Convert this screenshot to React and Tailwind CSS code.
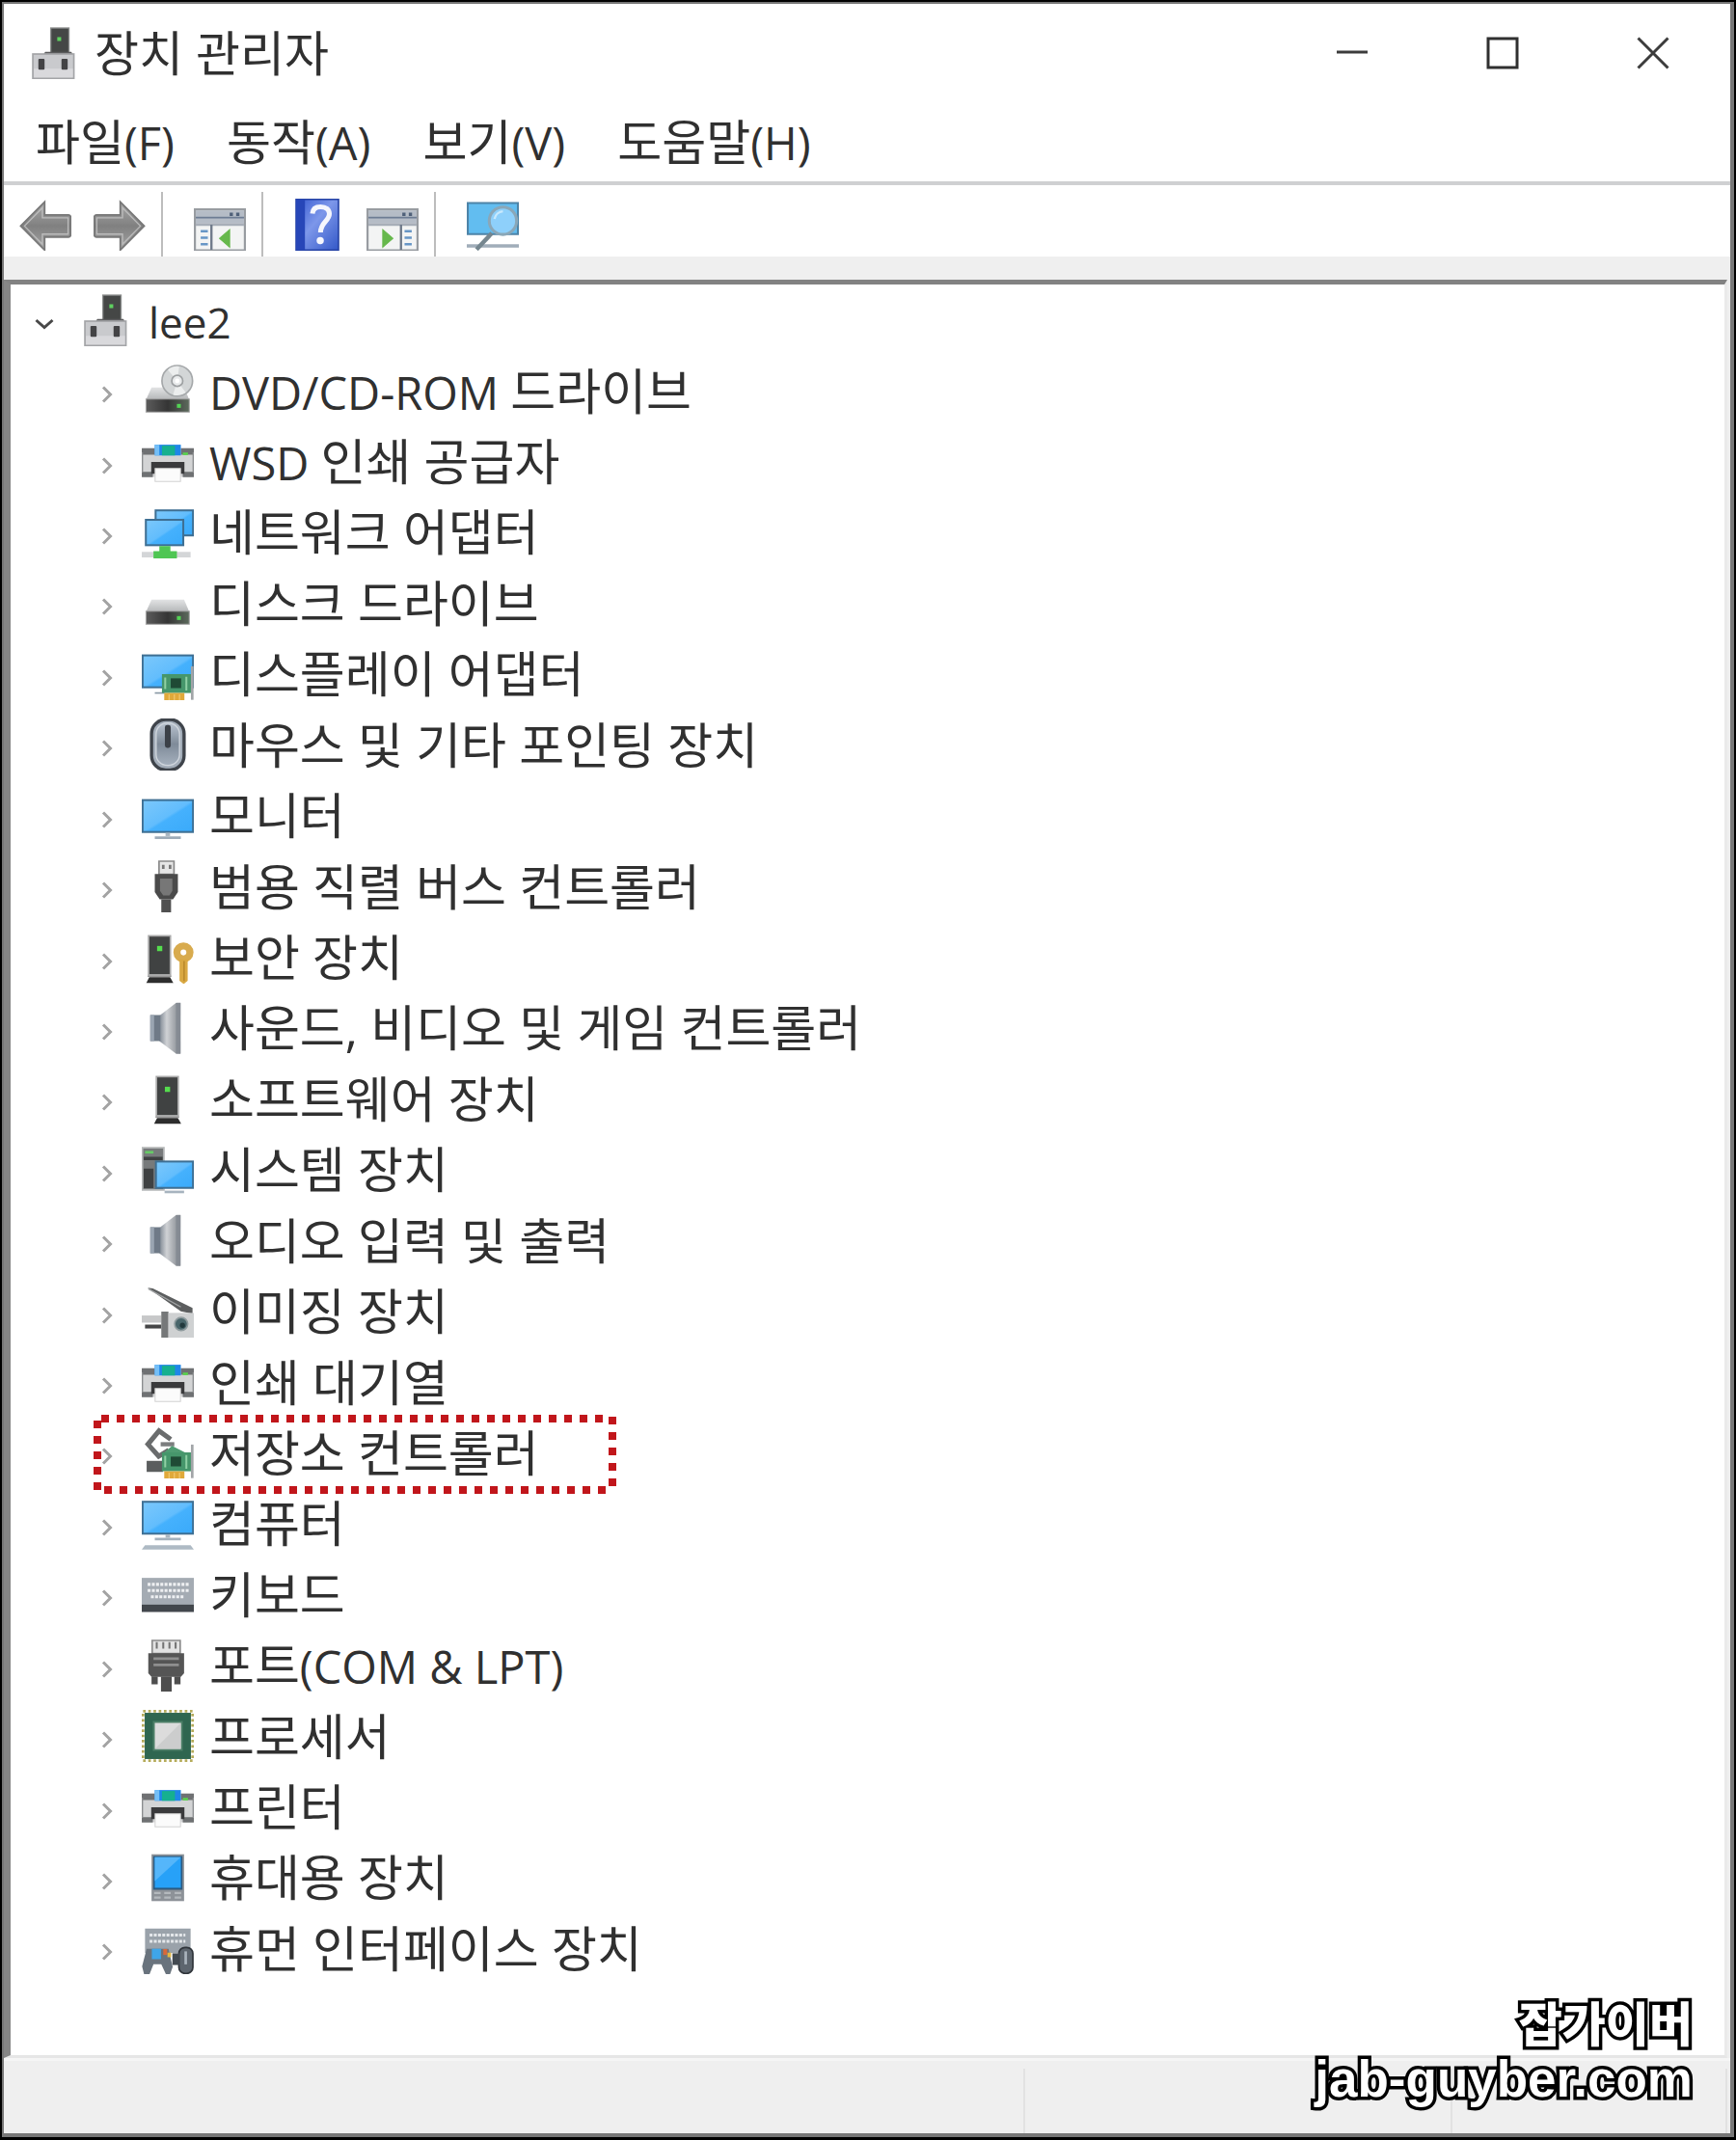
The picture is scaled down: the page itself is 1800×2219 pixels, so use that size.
import React from "react";

function Icon({ children }) {
  return (
    <svg viewBox="0 0 16 16" className="h-[54px] w-[54px] shrink-0" aria-hidden="true">
      {children}
    </svg>
  );
}

function Defs() {
  return (
    <svg width="0" height="0" className="absolute" aria-hidden="true">
      <defs>
        <linearGradient id="screen" x1="0" y1="0" x2="1" y2="1">
          <stop offset="0" stopColor="#7cc8fb" />
          <stop offset="0.5" stopColor="#62bdfd" />
          <stop offset="0.55" stopColor="#45b1fd" />
          <stop offset="1" stopColor="#3aaafa" />
        </linearGradient>
        <linearGradient id="silver" x1="0" y1="0" x2="0" y2="1">
          <stop offset="0" stopColor="#e3e4e5" />
          <stop offset="1" stopColor="#b4b6b8" />
        </linearGradient>
        <linearGradient id="dark" x1="0" y1="0" x2="1" y2="0">
          <stop offset="0" stopColor="#5c5c5c" />
          <stop offset="0.5" stopColor="#353535" />
          <stop offset="1" stopColor="#5c6a5c" />
        </linearGradient>
        <linearGradient id="cone" x1="0" y1="0" x2="1" y2="0">
          <stop offset="0" stopColor="#7f8893" />
          <stop offset="0.35" stopColor="#d0d2d5" />
          <stop offset="0.7" stopColor="#a3a7ac" />
          <stop offset="1" stopColor="#84898f" />
        </linearGradient>
        <linearGradient id="arrow" x1="0" y1="0" x2="0" y2="1">
          <stop offset="0" stopColor="#a9a9a9" />
          <stop offset="0.5" stopColor="#808080" />
          <stop offset="1" stopColor="#a4a4a4" />
        </linearGradient>
        <linearGradient id="book" x1="0" y1="0" x2="1" y2="1">
          <stop offset="0" stopColor="#3558d0" />
          <stop offset="0.45" stopColor="#7d97ea" />
          <stop offset="1" stopColor="#3358c8" />
        </linearGradient>
        <linearGradient id="mouse" x1="0" y1="0" x2="0" y2="1">
          <stop offset="0" stopColor="#b9c3cf" />
          <stop offset="0.5" stopColor="#7f8b99" />
          <stop offset="1" stopColor="#a5b0bd" />
        </linearGradient>
      </defs>
    </svg>
  );
}

function Screen({ x, y, w, h }) {
  return (
    <rect x={x + 0.25} y={y + 0.25} width={w - 0.5} height={h - 0.5} fill="url(#screen)" stroke="#3e6f93" strokeWidth="0.6" />
  );
}

function Card() {
  return (
    <g>
      <rect x="6.2" y="8" width="8.9" height="5.8" fill="#46966b" />
      <rect x="8.9" y="9.3" width="3.2" height="3" fill="#1f4a35" />
      <path d="M7.2 9v3.6M13.7 8.8v4.2" stroke="#8fd0a4" strokeWidth="0.6" />
      <rect x="6.9" y="13.8" width="6.2" height="2.2" fill="#e0a93a" />
      <path d="M8.4 14.2V16M10 14.2V16M11.6 14.2V16" stroke="#f0c56a" strokeWidth="0.4" />
      <path d="M15.5 5.6V15.9" stroke="#a2a5a8" strokeWidth="0.8" />
    </g>
  );
}

const DeviceManager = () => (
  <Icon>
    <rect x="6.7" y="0.3" width="5.6" height="8" fill="#454746" stroke="#8d8f8e" strokeWidth="0.4" />
    <rect x="8.7" y="3.1" width="1.2" height="1.2" fill="#5fd060" />
    <path d="M5 7.6h8l.6.9H4.4z" fill="#5b5b5d" />
    <rect x="1.2" y="8.3" width="12.6" height="7.5" fill="#c9cacd" stroke="#a3a4a7" strokeWidth="0.5" />
    <path d="M1.5 12.8h12v2.7h-12z" fill="#d9d9dc" />
    <rect x="2.9" y="9.8" width="1.9" height="3.3" rx="0.3" fill="#434345" />
    <rect x="10" y="9.8" width="1.9" height="3.3" rx="0.3" fill="#434345" />
  </Icon>
);

const DriveBody = () => (
  <g>
    <path d="M3 7h10l1.6 3.8H1.3z" fill="url(#silver)" />
    <rect x="1.3" y="10.6" width="13.3" height="4" fill="url(#dark)" stroke="#a7a7a7" strokeWidth="0.3" />
    <rect x="10.8" y="12.1" width="1.2" height="1.2" fill="#53d354" />
  </g>
);

const Dvd = () => (
  <Icon>
    <DriveBody />
    <circle cx="10.9" cy="5" r="4.7" fill="#d3d6d7" stroke="#a5a8aa" strokeWidth="0.5" />
    <path d="M10.9 5 8 1.6A4.4 4.4 0 0 1 11.5.6zM10.9 5l2.6 3.6A4.4 4.4 0 0 1 9.6 9.3z" fill="#eceeee" />
    <circle cx="10.9" cy="5" r="1.7" fill="#e9ebec" stroke="#9da0a2" strokeWidth="0.5" />
    <circle cx="10.9" cy="5" r="0.7" fill="#fff" />
  </Icon>
);

const Disk = () => (
  <Icon>
    <DriveBody />
  </Icon>
);

const Printer = () => (
  <Icon>
    <rect x="0.2" y="3.8" width="15.6" height="8.8" fill="#d3d4d5" />
    <path d="M0 3.8h4v2H0zM12 3.8h4v2h-4zM0 11h3.4v1.7H0zM12.6 11H16v1.7h-3.4z" fill="#6f7173" />
    <path d="M.2 5v6M15.8 5v6" stroke="#8b8d8f" strokeWidth="0.4" />
    <rect x="4" y="2.7" width="8" height="3.3" fill="#1f86e8" />
    <rect x="6.2" y="3" width="4" height="3" fill="#16b08f" />
    <path d="M4 2.7h1.4v3.3H4z" fill="#74bff7" />
    <rect x="12.6" y="5.1" width="1.6" height="0.8" fill="#5ad14e" />
    <path d="M2.9 8h10.2v3.6H2.9z" fill="#3a3a3c" />
    <path d="M4.1 10h7.8v4H4.1z" fill="#fbfbfb" stroke="#d2d2d2" strokeWidth="0.3" />
  </Icon>
);

const Network = () => (
  <Icon>
    <Screen x={4} y={1} w={12} h={8.2} />
    <Screen x={1} y={3.9} w={12} h={8.3} />
    <path d="M0 14h15v1.7H0z" fill="#d4d6d8" />
    <path d="M5.4 12.2h3.4v1.6h2v2.2H3.6v-2.2h1.8z" fill="#4fc653" />
  </Icon>
);

const Display = () => (
  <Icon>
    <Screen x={0} y={2} w={16} h={10.3} />
    <path d="M4 13.8h3" stroke="#8b9aa6" strokeWidth="0.5" />
    <Card />
  </Icon>
);

const MouseDevice = () => (
  <Icon>
    <rect x="3" y="0.3" width="10" height="15.5" rx="4.4" fill="#a3adb9" stroke="#3f444b" strokeWidth="1" />
    <rect x="4.4" y="1.4" width="7.2" height="13" rx="3.4" fill="url(#mouse)" stroke="#d0d6dd" strokeWidth="0.4" />
    <rect x="7.1" y="2" width="1.8" height="7" rx="0.7" fill="#3c4148" />
  </Icon>
);

const Monitor = () => (
  <Icon>
    <Screen x={0} y={2.9} w={16} h={10.3} />
    <path d="M7.3 13.2h1.4v1H7.3z" fill="#a9b6c1" />
    <path d="M4 14.3h8v.8H4z" fill="#9dabb8" />
  </Icon>
);

const Usb = () => (
  <Icon>
    <path d="M5.3.3h4.6v4H5.3z" fill="#e6e6e6" stroke="#8a8a8a" strokeWidth="0.5" />
    <path d="M6.2 1.4h.8v1.3h-.8zM8.3 1.4h.8v1.3h-.8z" fill="#777" />
    <path d="M4 4.2h7.1v5.6L9.6 12H5.5L4 9.8z" fill="#4a4a4a" />
    <path d="M5.6 5.6h3.8v3.8l-.9 1.4H6.600l-1-1.400z" fill="#777" />
    <path d="M6 12h3v4H6z" fill="#505050" />
  </Icon>
);

const Tower = ({ x }) => (
  <g>
    <rect x={x + 0.3} y="1.3" width="6.7" height="12" fill="#404242" stroke="#a9a9a9" strokeWidth="0.5" />
    <rect x={x + 2.9} y="4.4" width="1.6" height="1.6" fill="#55dd4e" />
    <path d={`M${x + 0.5} 14h6.4l1 1.8H${x - 0.4}z`} fill="#2d2d2d" />
    <path d={`M${x} 13.7h7.3`} stroke="#8d8d8d" strokeWidth="0.4" />
  </g>
);

const Security = () => (
  <Icon>
    <Tower x={1.8} />
    <circle cx="12.8" cy="6.400" r="2" fill="#fff" stroke="#d8ab4e" strokeWidth="2.2" />
    <path d="M11.600 8.500h2.500v6.600l-1.200 1-1.300-1z" fill="#d9a842" />
    <path d="M13 9v6.200" stroke="#b58428" strokeWidth="0.400" />
  </Icon>
);

const Speaker = () => (
  <Icon>
    <path d="M5.4 4.2 10.6.2h1.3v15.7h-1.3L5.4 12z" fill="url(#cone)" />
    <path d="M10.5.3h1.4v15.5h-1.4z" fill="#858b93" />
    <path d="M2.6 4h3.1v8H2.6z" fill="#6f7a87" />
    <path d="M2.6 4h1.2v8H2.6z" fill="#9aa5b1" />
  </Icon>
);

const Software = () => (
  <Icon>
    <Tower x={4.2} />
  </Icon>
);

const System = () => (
  <Icon>
    <rect x="0.2" y="1.2" width="6.6" height="13" fill="#777a7b" stroke="#b7b9ba" strokeWidth="0.5" />
    <path d="M1 2.2h2.6v.8H1z" fill="#66cb66" />
    <path d="M.6 4h5.8v1H.6zM.6 7.6h3v6h-3z" fill="#3f4142" />
    <Screen x={4.1} y={5.2} w={11.9} h={8.6} />
    <path d="M7 14.4h6v.8H7z" fill="#a7b4bf" />
  </Icon>
);

const Imaging = () => (
  <Icon>
    <path d="M1.800.700 3.400.900 15.600 6.900v1.800L12 7.900z" fill="#5c5e5f" />
    <path d="M2 1l10 5.6" stroke="#a1a3a4" strokeWidth="0.4" />
    <path d="M0 9.2h6v2.2H0z" fill="#c7c8c9" />
    <path d="M1 12h5v1.2H1z" fill="#454647" />
    <path d="M6 8h2.2v8H6z" fill="#767879" />
    <path d="M8.2 8.4H16V16H8.2z" fill="#cfd1d2" />
    <circle cx="12.1" cy="11.8" r="2" fill="#49666b" stroke="#8f9b9e" strokeWidth="0.5" />
    <circle cx="12.5" cy="12.2" r="0.8" fill="#22393d" />
  </Icon>
);

const Storage = () => (
  <Icon>
    <path d="M1.500 10.600h5v3.400h-5z" fill="#5b5d5e" />
    <path d="M8.900 4 5.300 1.400 1.900 5.500 5.200 9.200 8.300 7.300" fill="none" stroke="#6a6c6d" strokeWidth="1.500" />
    <path d="M5.800 5.500h4.200" fill="none" stroke="#7b7d7e" strokeWidth="1.300" />
    <path d="M6.200 8.600 9.300 6l4.400 2.200z" fill="#4f9c72" />
    <Card />
  </Icon>
);

const Computer = () => (
  <Icon>
    <Screen x={0} y={1} w={16} h={10.3} />
    <path d="M7.3 11.3h1.4v1H7.3z" fill="#a9b6c1" />
    <path d="M4 12.3h8v.8H4z" fill="#a4b2be" />
    <path d="M1 14.6h14l1 1.3H0z" fill="#aebac4" />
  </Icon>
);

const Keys = () => (
  <path d="M1.8 5h12.6M1.8 6.9h12.6M2.8 8.8h10.4" stroke="#eef0f2" strokeWidth="0.9" strokeDasharray="0.9 0.4" />
);

const Keyboard = () => (
  <Icon>
    <rect x="0" y="3" width="16" height="8.2" fill="#a4abb3" />
    <Keys />
    <path d="M0 11.200h16v2.300H0z" fill="#42474c" />
  </Icon>
);

const Port = () => (
  <Icon>
    <path d="M3.2.3h8.6v4H3.2z" fill="#e2e2e2" stroke="#8b8b8b" strokeWidth="0.5" />
    <path d="M4.6.8v2M6.6.8v2M8.5.8v2M10.4.8v2" stroke="#727272" strokeWidth="0.6" />
    <path d="M2 4.2h11v6.2l-1 1.1H3l-1-1.1z" fill="#555" />
    <path d="M3.6 5.9h7.8M3.6 7.8h7.8" stroke="#8f8f8f" strokeWidth="0.8" />
    <path d="M3 11.4h1.9v2.4H3zM10 11.4h1.9v2.4H10zM5.9 11.4h3.3V16H5.9z" fill="#4e4e4e" />
  </Icon>
);

const Processor = () => (
  <Icon>
    <rect x="0.4" y="0.4" width="15.2" height="15.2" fill="none" stroke="#b5ab5a" strokeWidth="0.8" strokeDasharray="0.8 0.8" />
    <rect x="0.9" y="0.9" width="14.2" height="14.2" fill="#2f6650" />
    <rect x="3.4" y="3.4" width="9.2" height="9.2" fill="#4c7f67" />
    <rect x="4" y="4" width="8" height="8" fill="#dcdcdc" />
    <path d="M4 12 12 4v8z" fill="#cccdcd" />
  </Icon>
);

const Phone = () => (
  <Icon>
    <rect x="3" y="0.8" width="10" height="14.4" fill="#8d9298" />
    <path d="M3.5 1.3h9v10.4h-9z" fill="#2c5a80" />
    <path d="M4 1.7h8v9.400H4z" fill="#27a1f8" />
    <path d="M4 1.7h8L4 9z" fill="#55b6fa" />
    <path d="M3.8 12.7h2M6.9 12.7h2M10.1 12.7h2M3.8 14.1h2M6.9 14.1h2M10.1 14.1h2" stroke="#b4b9bd" strokeWidth="0.7" />
  </Icon>
);

const Hid = () => (
  <Icon>
    <rect x="1" y="2" width="14" height="7.5" fill="#9aa2aa" />
    <path d="M2.4 4h11M2.4 5.9h11" stroke="#e4e7ea" strokeWidth="0.9" strokeDasharray="0.9 0.4" />
    <path d="M1.5 8.2h6.7l1.3 5.6-.8 2.2H7.4l-1.4-3H3.6l-1.2 3H.7L.1 13.6z" fill="#69737d" />
    <rect x="3.1" y="8.2" width="2.8" height="3.2" fill="#3fa5e8" />
    <path d="M6.6 8.3h1.2v1.8H6.6z" fill="#d9683a" />
    <path d="M7.9 9.4H9v1.4H7.9z" fill="#e3b742" />
    <rect x="11.4" y="7.8" width="4.3" height="8" rx="1.9" fill="#5d656e" stroke="#30353b" strokeWidth="0.5" />
    <path d="M13.5 9v4" stroke="#aab3bc" strokeWidth="0.8" />
    <path d="M9.4 9.6h2.2v3.6H9.4z" fill="#434a51" />
  </Icon>
);

const Arrow = ({ flip }) => (
  <Icon>
    <g transform={flip ? "translate(16 0) scale(-1 1)" : undefined}>
      <path d="M.4 9 7.8 1.6v4h7.3a.7.7 0 0 1 .7.7v5.4a.7.7 0 0 1-.7.7H7.8v4z" transform="translate(0 -.6)" fill="url(#arrow)" stroke="#777" strokeWidth="0.5" />
      <path d="M1.600 8.400 7.100 2.800v3.100h7.900v5H7.100V14z" fill="none" stroke="#bcbcbc" strokeWidth="0.4" />
    </g>
  </Icon>
);

const Pane = ({ flip }) => (
  <Icon>
    <rect x="0.3" y="3.3" width="15.4" height="12.6" fill="#f3f4f4" stroke="#989ca1" strokeWidth="0.7" />
    <path d="M.6 3.6h14.8v3.8H.6z" fill="#b5bcc6" />
    <path d="M.6 5.8h14.8" stroke="#6d7c93" strokeWidth="0.5" />
    <path d="M11 4.3h1v1h-1zM13 4.3h1v1h-1z" fill="#4f6079" />
    <path d="M.6 7.5h14.8v.9H.6z" fill="#a7aeb8" />
    <g transform={flip ? "translate(16 0) scale(-1 1)" : undefined}>
      <path d="M5.4 8v7.7" stroke="#6f7a8a" strokeWidth="0.7" />
      <path d="M2.1 10h2.2M2.1 12h2.2M2.1 14h2.2" stroke="#6796c6" strokeWidth="0.8" />
      <path d="M7.9 12.200 11 9.500v5.400z" fill="#66b84c" stroke="#66b84c" strokeWidth="0.300" />
    </g>
  </Icon>
);

const Help = () => (
  <Icon>
    <rect x="1.5" y="0.2" width="13" height="15.6" fill="url(#book)" stroke="#2744a6" strokeWidth="0.5" />
    <path d="M1.5 0.2h2.7v15.6H1.5z" fill="#2746b8" />
    <path d="M6.5 4.6C6.6 3 7.7 2.5 9 2.5c1.7 0 2.7.9 2.7 2.2 0 2.2-2.7 2.5-2.7 5.7" fill="none" stroke="#f5f6fd" strokeWidth="1.5" />
    <circle cx="8.9" cy="12.9" r="1.1" fill="#f5f6fd" />
  </Icon>
);

const Scan = () => (
  <Icon>
    <path d="M.3 1.3h15.4v9.6H.3z" fill="#62bdf0" stroke="#4d84a8" strokeWidth="0.6" />
    <path d="M0 14h16v1H0z" fill="#a0adb9" />
    <path d="M7.7 10.6 3 15.6" stroke="#75868f" strokeWidth="1.3" />
    <circle cx="11.1" cy="6.8" r="4.2" fill="#8ed0fb" stroke="#8aa7b8" strokeWidth="0.9" />
    <path d="M8.5 6.2a2.9 2.9 0 0 1 2.6-2.3" fill="none" stroke="#c9e9fd" strokeWidth="0.7" />
  </Icon>
);

// Latin runs are set slightly smaller than Hangul so that both keep an even height.
function Label({ text, latin }) {
  return text
    .split(/([A-Za-z0-9()&/-][A-Za-z0-9()&/ -]*)/)
    .filter(Boolean)
    .map((part, i) =>
      /^[A-Za-z0-9()&/-]/.test(part) ? (
        <span key={i} className={latin}>{part}</span>
      ) : (
        part
      )
    );
}

const devices = [
  { name: "DVD/CD-ROM 드라이브", icon: Dvd },
  { name: "WSD 인쇄 공급자", icon: Printer },
  { name: "네트워크 어댑터", icon: Network },
  { name: "디스크 드라이브", icon: Disk },
  { name: "디스플레이 어댑터", icon: Display },
  { name: "마우스 및 기타 포인팅 장치", icon: MouseDevice },
  { name: "모니터", icon: Monitor },
  { name: "범용 직렬 버스 컨트롤러", icon: Usb },
  { name: "보안 장치", icon: Security },
  { name: "사운드, 비디오 및 게임 컨트롤러", icon: Speaker },
  { name: "소프트웨어 장치", icon: Software },
  { name: "시스템 장치", icon: System },
  { name: "오디오 입력 및 출력", icon: Speaker },
  { name: "이미징 장치", icon: Imaging },
  { name: "인쇄 대기열", icon: Printer },
  { name: "저장소 컨트롤러", icon: Storage, marked: true },
  { name: "컴퓨터", icon: Computer },
  { name: "키보드", icon: Keyboard },
  { name: "포트(COM & LPT)", icon: Port },
  { name: "프로세서", icon: Processor },
  { name: "프린터", icon: Printer },
  { name: "휴대용 장치", icon: Phone },
  { name: "휴먼 인터페이스 장치", icon: Hid },
];

const menus = ["파일(F)", "동작(A)", "보기(V)", "도움말(H)"];

function Marker() {
  return (
    <svg viewBox="0 0 542 84" className="pointer-events-none absolute -top-1 left-[86px] h-[84px] w-[542px]" aria-hidden="true">
      <g stroke="#c1161b" strokeWidth="8" strokeDasharray="8 8" fill="none">
        <path d="M8 5H528M11 79H531M4 7V79M538 3V75" />
      </g>
    </svg>
  );
}

function DeviceRow({ device }) {
  const DeviceIcon = device.icon;
  return (
    <li role="treeitem" aria-expanded="false" className="relative flex min-h-16 flex-1 items-center pl-[88px]">
      <button type="button" aria-label={`${device.name} 펼치기`} className="mr-6 flex h-9 w-6 items-center justify-center pt-2">
        <svg viewBox="0 0 12 18" className="h-[18px] w-3" aria-hidden="true">
          <path d="M2 1.5 9.5 9 2 16.5" fill="none" stroke="#a3a3a3" strokeWidth="3" />
        </svg>
      </button>
      <DeviceIcon />
      <span className="ml-4 whitespace-nowrap">
        <Label text={device.name} latin="text-[47px]" />
      </span>
      {device.marked && <Marker />}
    </li>
  );
}

function ToolButton({ label, children }) {
  return (
    <button type="button" aria-label={label} className="flex shrink-0">
      {children}
    </button>
  );
}

const Separator = () => <div className="h-[67px] w-[2px] shrink-0 self-end bg-[#bdbdbd]" />;

export default function App() {
  return (
    <div className="flex min-h-screen flex-col bg-black px-[2px] pt-[2px] pb-[3px] font-['Open_Sans','Noto_Sans_CJK_KR',sans-serif] text-[51px] leading-none text-[#303030]">
      <Defs />
      <main className="relative flex flex-1 flex-col border-t-2 border-r-4 border-b-4 border-l-2 border-[#777777] bg-white">
        <header className="flex h-[102px] items-center pr-[2px] pl-[26px]">
          <DeviceManager />
          <h1 className="ml-[14px] flex-1 text-[50px]">장치 관리자</h1>
          <button type="button" aria-label="최소화" className="flex h-full w-[156px] items-center justify-center">
            <svg viewBox="0 0 34 34" className="h-[34px] w-[34px]" aria-hidden="true">
              <path d="M1 16h32" stroke="#3c3c3c" strokeWidth="3" />
            </svg>
          </button>
          <button type="button" aria-label="최대화" className="flex h-full w-[156px] items-center justify-center">
            <svg viewBox="0 0 34 34" className="h-[34px] w-[34px]" aria-hidden="true">
              <rect x="2" y="2" width="30" height="30" fill="none" stroke="#303030" strokeWidth="3" />
            </svg>
          </button>
          <button type="button" aria-label="닫기" className="flex h-full w-[156px] items-center justify-center">
            <svg viewBox="0 0 34 34" className="h-[34px] w-[34px]" aria-hidden="true">
              <path d="M1.5 1.5l31 31M32.5 1.5l-31 31" stroke="#3c3c3c" strokeWidth="3" />
            </svg>
          </button>
        </header>

        <nav className="flex h-[86px] items-center gap-[54px] border-b-4 border-[#cfd0d2] pl-[33px] text-[50px]">
          {menus.map((menu) => (
            <button key={menu} type="button" className="whitespace-nowrap">
              <Label text={menu} latin="text-[47px]" />
            </button>
          ))}
        </nav>

        <div role="toolbar" aria-label="도구 모음" className="flex h-[74px] items-center pt-2 pl-4">
          <div className="flex gap-[23px] pr-4">
            <ToolButton label="뒤로"><Arrow /></ToolButton>
            <ToolButton label="앞으로"><Arrow flip /></ToolButton>
          </div>
          <Separator />
          <div className="flex pr-4 pl-8">
            <ToolButton label="콘솔 트리 표시/숨기기"><Pane /></ToolButton>
          </div>
          <Separator />
          <div className="flex gap-6 pr-4 pl-[29px]">
            <ToolButton label="도움말"><Help /></ToolButton>
            <ToolButton label="작업 창 표시/숨기기"><Pane flip /></ToolButton>
          </div>
          <Separator />
          <div className="flex pl-8">
            <ToolButton label="하드웨어 변경 사항 검색"><Scan /></ToolButton>
          </div>
        </div>

        <div className="flex flex-1 flex-col bg-[#efefef] pt-6 pr-[3px]">
          <ul role="tree" aria-label="장치" className="flex flex-1 flex-col border-t-[5px] border-r-[3px] border-b-[3px] border-l-[7px] border-t-[#828282] border-r-[#eaeaea] border-b-[#e6e6e6] border-l-[#868686] bg-white pb-[74px]">
            <li role="treeitem" aria-expanded="true" className="flex min-h-16 flex-1 items-center pl-[23px]">
              <button type="button" aria-label="lee2 접기" className="mr-[26px] flex h-9 w-6 items-center justify-center pt-2">
                <svg viewBox="0 0 20 12" className="h-3 w-5" aria-hidden="true">
                  <path d="M1.5 2 10 9.5 18.5 2" fill="none" stroke="#484848" strokeWidth="3" />
                </svg>
              </button>
              <DeviceManager />
              <span className="ml-4">
                <Label text="lee2" latin="text-[44px]" />
              </span>
            </li>
            {devices.map((device) => (
              <DeviceRow key={device.name} device={device} />
            ))}
          </ul>
        </div>

        <footer className="flex h-[78px] shrink-0 border-t-[3px] border-[#f5f5f5] bg-[#efefef] pt-2 pr-[3px]">
          <div className="flex-1 border-r-2 border-[#e2e2e2]" />
          <div className="w-[443px] border-r-2 border-[#e2e2e2]" />
          <div className="w-[285px] border-r-2 border-[#e2e2e2]" />
        </footer>

        <div className="absolute right-[39px] bottom-[30px] flex flex-col items-end gap-1 font-['Liberation_Sans','Noto_Sans_CJK_KR',sans-serif] text-[53px] font-bold text-white [paint-order:stroke_fill] [-webkit-text-stroke:7px_#000]">
          <span className="text-[49px] font-black">잡가이버</span>
          <span>jab-guyber.com</span>
        </div>
      </main>
    </div>
  );
}
